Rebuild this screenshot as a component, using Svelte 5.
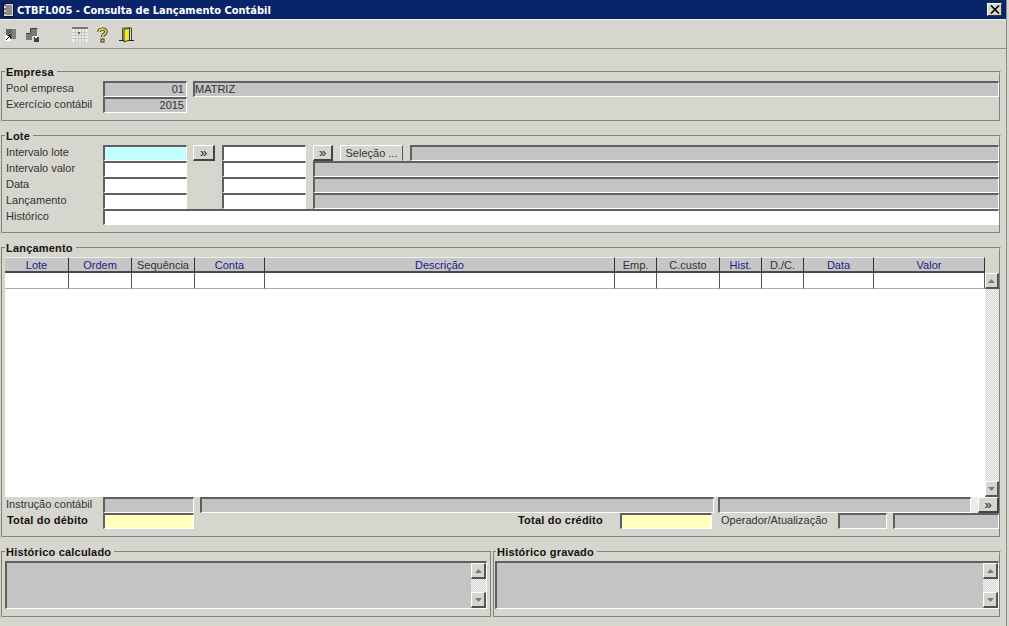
<script>
  const cols = [
    { t: 'Lote', w: 64, blue: true },
    { t: 'Ordem', w: 63, blue: true },
    { t: 'Sequência', w: 63 },
    { t: 'Conta', w: 70, blue: true },
    { t: 'Descrição', w: 350, blue: true },
    { t: 'Emp.', w: 42 },
    { t: 'C.custo', w: 63 },
    { t: 'Hist.', w: 42, blue: true },
    { t: 'D./C.', w: 42 },
    { t: 'Data', w: 70, blue: true },
    { t: 'Valor', w: 111, blue: true }
  ];
  const lines = ['Intervalo valor', 'Data', 'Lançamento'];
</script>

{#snippet arrowUp()}
  <svg width="9" height="6" viewBox="0 0 9 6"><path d="M4.5 1 L8 5 H1 Z" fill="#7a7a7a" /></svg>
{/snippet}
{#snippet arrowDown()}
  <svg width="9" height="6" viewBox="0 0 9 6"><path d="M1 1 H8 L4.5 5 Z" fill="#7a7a7a" /></svg>
{/snippet}
{#snippet vscroll()}
  <div class="scroll">
    <div class="sbtn">{@render arrowUp()}</div>
    <div class="track"></div>
    <div class="sbtn">{@render arrowDown()}</div>
  </div>
{/snippet}

<div class="window">
  <header class="title">
    <svg class="appicon" width="11" height="14" viewBox="0 0 11 14">
      <rect x="0.5" y="0.5" width="10" height="13" fill="#d8d8d8" stroke="#111" />
      <path d="M3 3h6M3 5h6M3 7h6M3 9h6M3 11h6" stroke="#444" />
      <path d="M0 2h3M0 6h3M0 10h3" stroke="#000" />
    </svg>
    <span class="title-text">CTBFL005 - Consulta de Lançamento Contábil</span>
    <div class="close">
      <svg width="10" height="9" viewBox="0 0 10 9"><path d="M1 0.5 L9 8.5 M9 0.5 L1 8.5" stroke="#000" stroke-width="1.6" /></svg>
    </div>
  </header>

  <nav class="toolbar">
    <svg class="t1" width="11" height="12" viewBox="0 0 11 12">
      <rect x="1" y="0" width="10" height="10" fill="#666" />
      <rect x="7" y="0" width="4" height="10" fill="#808080" />
      <rect x="0" y="6" width="6" height="6" fill="#fff" />
      <path d="M1 11 L5 7 M2.5 6.5 H5.5 V9.5" stroke="#000" fill="none" />
    </svg>
    <svg class="t2" width="13" height="14" viewBox="0 0 13 14">
      <path d="M0 6 H5 V1 H11 V8 H6 V12 H0 Z" fill="#7a7a76" />
      <path d="M0 5.5 H4.5 V0.5 H11.5" stroke="#3c3c3c" fill="none" />
      <rect x="8" y="9" width="5" height="5" fill="#444" />
      <rect x="9" y="8" width="2" height="2" fill="#fff" />
    </svg>
    <svg class="t3" width="16" height="15" viewBox="0 0 16 15">
      <rect x="0" y="0" width="16" height="15" fill="#ecece6" />
      <rect x="0" y="0" width="16" height="2" fill="#777" />
      <path d="M0 5.5H16M0 8.5H16M0 11.5H16M3.5 2V15M6.5 2V15M9.5 2V15M12.5 2V15" stroke="#c4c4cc" />
      <rect x="6" y="5" width="2" height="2" fill="#666" />
    </svg>
    <svg class="t4" width="11" height="16" viewBox="0 0 11 16">
      <path d="M2 5 C2 1.5 9 1 9 4.5 C9 7.5 5.5 7 5.5 10" fill="none" stroke="#333" stroke-width="3.4" />
      <path d="M2 5 C2 1.5 9 1 9 4.5 C9 7.5 5.5 7 5.5 10" fill="none" stroke="#f2e13a" stroke-width="1.6" />
      <rect x="3.5" y="11.5" width="4" height="4" fill="#333" />
      <rect x="4.5" y="12.5" width="2" height="2" fill="#f2e13a" />
    </svg>
    <svg class="t5" width="15" height="16" viewBox="0 0 15 16">
      <path d="M3.5 13 V1 H12.5 V13" fill="#d8d8d0" stroke="#444" />
      <path d="M5 2.5 L10.5 1 V13 L5 15 Z" fill="#f4ec20" stroke="#333" />
      <path d="M0 13.5 H5 M10 13.5 H15" stroke="#222" />
    </svg>
  </nav>

  <main class="content">
    <fieldset>
      <legend>Empresa</legend>
      <div class="g-empresa">
        <span class="lbl">Pool empresa</span>
        <div class="f gray num">01</div>
        <i></i>
        <div class="f gray">MATRIZ</div>
        <span class="lbl">Exercício contábil</span>
        <div class="f gray num">2015</div>
      </div>
    </fieldset>

    <fieldset>
      <legend>Lote</legend>
      <div class="g-lote">
        <span class="lbl">Intervalo lote</span>
        <div class="f cyan"></div>
        <i></i>
        <button class="btn">»</button>
        <i></i>
        <div class="f white"></div>
        <i></i>
        <button class="btn">»</button>
        <i></i>
        <button class="btn sel">Seleção ...</button>
        <i></i>
        <div class="f gray"></div>

        {#each lines as line}
          <span class="lbl">{line}</span>
          <div class="f white"></div>
          <i class="sp3"></i>
          <div class="f white"></div>
          <i></i>
          <div class="f gray wide"></div>
        {/each}

        <span class="lbl">Histórico</span>
        <div class="f white full"></div>
      </div>
    </fieldset>

    <fieldset>
      <legend>Lançamento</legend>
      <div class="tablewrap">
        <div class="table">
          <div class="row">
            {#each cols as c}
              <div class="th" class:blue={c.blue} style="width:{c.w}px">{c.t}</div>
            {/each}
          </div>
          <div class="row">
            {#each cols as c}
              <div class="td" style="width:{c.w}px"></div>
            {/each}
          </div>
        </div>
        {@render vscroll()}
      </div>
      <div class="g-instr">
        <span class="lbl">Instrução contábil</span>
        <div class="f gray"></div>
        <i></i>
        <div class="f gray"></div>
        <i></i>
        <div class="f gray"></div>
        <i class="whitegap"></i>
        <button class="btn">»</button>
      </div>
      <div class="g-total">
        <b class="lbl">Total do débito</b>
        <div class="f yellow"></div>
        <i></i>
        <b class="lbl">Total do crédito</b>
        <div class="f yellow"></div>
        <i></i>
        <span class="lbl">Operador/Atualização</span>
        <div class="f gray"></div>
        <i></i>
        <div class="f gray"></div>
      </div>
    </fieldset>

    <div class="bottom">
      <fieldset class="hist-a">
        <legend>Histórico calculado</legend>
        <div class="memo">{@render vscroll()}</div>
      </fieldset>
      <fieldset class="hist-b">
        <legend>Histórico gravado</legend>
        <div class="memo">{@render vscroll()}</div>
      </fieldset>
    </div>
  </main>
</div>

<style>
  :global(body) {
    margin: 0;
    background: #d6d6ce;
    font-family: "Liberation Sans", Arial, sans-serif;
    font-size: 11px;
    color: #222;
    overflow: hidden;
  }
  .window {
    width: 1007px;
    height: 626px;
    box-sizing: border-box;
    border-right: 1px solid #8a8a84;
  }
  .title {
    height: 19px;
    background: #0a246a;
    display: flex;
    align-items: center;
    padding: 0 3px;
    color: #fff;
    box-sizing: border-box;
  }
  .appicon {
    margin-right: 3px;
  }
  .title-text {
    font-family: "DejaVu Sans", Verdana, sans-serif;
    font-stretch: condensed;
    font-weight: bold;
    font-size: 11px;
    flex: 1;
    padding-top: 1px;
  }
  .close {
    width: 15px;
    height: 13px;
    background: #d6d6ce;
    border: 1px solid;
    border-color: #fff #333 #333 #fff;
    box-sizing: border-box;
    display: flex;
    align-items: center;
    justify-content: center;
    margin-right: 1px;
  }
  .toolbar {
    border-top: 1px solid #f0f0ea;
    border-bottom: 1px solid #8f8f88;
    display: flex;
    align-items: center;
    padding-top: 1px;
    height: 27px;
  }
  .t1 { margin-left: 5px; }
  .t2 { margin-left: 10px; }
  .t3 { margin-left: 33px; }
  .t4 { margin-left: 9px; }
  .t5 { margin-left: 11px; }
  .content {
    display: flex;
    flex-direction: column;
    gap: 7px;
    padding: 16px 0 0 1px;
    width: 1000px;
  }
  fieldset {
    margin: 0;
    padding: 2px 0 7px 2px;
    border: 2px groove #d6d6ce;
    min-width: 0;
    box-sizing: border-box;
  }
  legend {
    font-weight: bold;
    font-size: 11px;
    letter-spacing: 0.2px;
    line-height: 14px;
    height: 14px;
    padding: 0 3px 0 1px;
    color: #111;
  }
  .lbl {
    padding-left: 1px;
    line-height: 15px;
    white-space: nowrap;
    color: #333;
  }
  b.lbl {
    padding-left: 2px;
    letter-spacing: 0.2px;
    color: #111;
  }
  .f {
    height: 16px;
    box-sizing: border-box;
    border: solid;
    border-width: 2px 1px 1px 2px;
    border-color: #5f5f5f #fff #fff #5f5f5f;
    padding: 0 2px 0 0;
    line-height: 13px;
    overflow: hidden;
    color: #333;
  }
  .num { text-align: right; }
  .gray { background: #c4c4c4; }
  .white { background: #fff; }
  .cyan { background: #c4ffff; }
  .yellow { background: #ffffbe; }
  .btn {
    height: 16px;
    margin: 0;
    padding: 0;
    font: 13px "Liberation Sans", Arial, sans-serif;
    line-height: 12px;
    color: #222;
    background: #d6d6ce;
    border: solid;
    border-width: 1px 2px 2px 1px;
    border-color: #fff #444 #444 #fff;
    box-sizing: border-box;
  }
  .btn.sel {
    font-size: 11px;
    color: #333;
    border-right-width: 1px;
    border-bottom-width: 1px;
    border-color: #fff #555 #d6d6ce #fff;
  }
  .g-empresa {
    display: grid;
    grid-template-columns: 98px 84px 6px 806px;
    grid-auto-rows: 16px;
  }
  .g-lote {
    display: grid;
    grid-template-columns: 98px 84px 6px 22px 7px 84px 7px 20px 7px 63px 7px 589px;
    grid-auto-rows: 16px;
  }
  .sp3 { grid-column: span 3; }
  .wide { grid-column: span 5; }
  .full { grid-column: 2 / -1; }
  .tablewrap {
    display: flex;
    height: 240px;
  }
  .table {
    width: 980px;
    background: #fff;
  }
  .row { display: flex; }
  .th {
    height: 16px;
    box-sizing: border-box;
    background: #c6c6c6;
    border-top: 1px solid #eee;
    border-right: 1px solid #333;
    border-bottom: 2px solid #4a4a4a;
    text-align: center;
    line-height: 14px;
    color: #333;
  }
  .th.blue { color: #1c1c8c; }
  .td {
    height: 16px;
    box-sizing: border-box;
    border-right: 1px solid #555;
    border-bottom: 1px solid #aaa;
  }
  .scroll {
    width: 14px;
    display: flex;
    flex-direction: column;
    padding-top: 16px;
    box-sizing: border-box;
  }
  .sbtn {
    height: 16px;
    background: #d6d6ce;
    border: solid;
    border-width: 1px 2px 2px 1px;
    border-color: #fff #555 #555 #fff;
    box-sizing: border-box;
    display: flex;
    align-items: center;
    justify-content: center;
  }
  .track {
    flex: 1;
    background-color: #ecece8;
    background-image: repeating-conic-gradient(#d6d6ce 0 25%, #f4f4f2 0 50%);
    background-size: 2px 2px;
  }
  .g-instr {
    display: grid;
    grid-template-columns: 98px 91px 6px 514px 4px 253px 7px 21px;
    grid-auto-rows: 16px;
  }
  .whitegap { background: #ecece8; }
  .g-total {
    display: grid;
    grid-template-columns: 98px 91px 322px 104px 92px 8px 118px 49px 6px 106px;
    grid-auto-rows: 16px;
    line-height: 16px;
  }
  .bottom {
    display: flex;
    gap: 1px;
  }
  .hist-a { width: 491px; }
  .hist-b { width: 508px; padding-left: 0; }
  .hist-b legend { margin-left: 1px; }
  .memo {
    height: 48px;
    box-sizing: border-box;
    background: #c4c4c4;
    border: solid;
    border-width: 2px 1px 1px 2px;
    border-color: #5f5f5f #fff #fff #5f5f5f;
    display: flex;
    justify-content: flex-end;
  }
  .hist-a .memo { margin-right: 3px; }
  .memo .scroll {
    padding-top: 0;
    height: 100%;
    width: 15px;
  }
</style>
